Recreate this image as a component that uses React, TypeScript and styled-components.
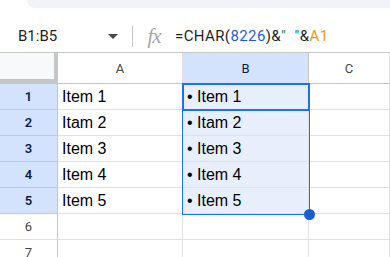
import styled, { createGlobalStyle } from "styled-components"

const GlobalStyle = createGlobalStyle`
  body{
    margin:0;
    background:white;
    font-family:Roboto, "Liberation Sans", Arial, sans-serif;
  }
`

const rows = [
  { n: 1, a: "Item 1", b: "• Item 1" },
  { n: 2, a: "Itam 2", b: "• Itam 2" },
  { n: 3, a: "Item 3", b: "• Item 3" },
  { n: 4, a: "Item 4", b: "• Item 4" },
  { n: 5, a: "Item 5", b: "• Item 5" },
  { n: 6, a: "", b: "" },
  { n: 7, a: "", b: "" }
]

export default function App() {
  return (
    <Page>
      <GlobalStyle />

      <TopStrip />

      <FormulaBar>
        <NameBox>
          <span>B1:B5</span>
          <Caret />
        </NameBox>
        <Divider />
        <Fx>fx</Fx>
        <Formula>
          =CHAR(<Num>8226</Num>)&amp;<Str>"&nbsp;&nbsp;"</Str>&amp;<Ref>A1</Ref>
        </Formula>
      </FormulaBar>

      <Sheet>
        <Corner />
        <ColHeader>A</ColHeader>
        <ColHeader $active>B</ColHeader>
        <ColHeader>C</ColHeader>

        {rows.map((r) => (
          <Row key={r.n}>
            <RowHeader $active={r.n <= 5}>{r.n}</RowHeader>
            <Cell>{r.a}</Cell>
            <Cell $selected={r.n <= 5}>{r.b}</Cell>
            <Cell />
          </Row>
        ))}

        <Selection>
          <ActiveCell />
          <FillHandle />
        </Selection>
      </Sheet>
    </Page>
  )
}

const Page = styled.div`
  width:390px;
  height:257px;
  overflow:hidden;
`

const TopStrip = styled.div`
  height:8px;
  margin-left:27px;
  background:#f0f4f9;
  border-bottom-left-radius:12px;
`

const FormulaBar = styled.div`
  height:32px;
  padding-top:12px;
  display:flex;
  align-items:center;
  border-bottom:1px solid #c7c7c7;
`

const NameBox = styled.div`
  width:100px;
  padding-left:18px;
  padding-right:14px;
  display:flex;
  align-items:center;
  justify-content:space-between;
  font-size:15px;
  color:#1f1f1f;
`

const Caret = styled.div`
  width:0;
  height:0;
  border-left:5px solid transparent;
  border-right:5px solid transparent;
  border-top:5px solid #444746;
`

const Divider = styled.div`
  width:1px;
  height:21px;
  background:#c7c7c7;
`

const Fx = styled.div`
  width:42px;
  text-align:center;
  font-family:"Liberation Serif", serif;
  font-style:italic;
  font-size:21px;
  color:#a6a6a6;
  letter-spacing:-1px;
`

const Formula = styled.div`
  font-size:15px;
  letter-spacing:0.4px;
  color:#1f1f1f;
  white-space:nowrap;
`

const Num = styled.span`
  color:#1a5fd0;
`

const Str = styled.span`
  color:#188038;
`

const Ref = styled.span`
  color:#f29900;
`

const Sheet = styled.div`
  position:relative;
  display:grid;
  grid-template-columns:58px 125px 126px 1fr;
  grid-auto-rows:26px;
  grid-template-rows:31px;
`

const Corner = styled.div`
  background:#f8f9fa;
  border-right:4px solid #c4c7c5;
  border-bottom:5px solid #c4c7c5;
`

const ColHeader = styled.div<{ $active?: boolean }>`
  display:flex;
  align-items:center;
  justify-content:center;
  font-size:13px;
  color:${(p) => (p.$active ? "#0b1f45" : "#444746")};
  background:${(p) => (p.$active ? "#d3e3fd" : "white")};
  border-right:1px solid ${(p) => (p.$active ? "#c4c7c5" : "#e1e1e1")};
  border-bottom:1px solid #c4c7c5;
`

const Row = styled.div`
  display:contents;
`

const RowHeader = styled.div<{ $active?: boolean }>`
  display:flex;
  align-items:center;
  justify-content:center;
  font-size:13px;
  font-weight:${(p) => (p.$active ? 600 : 400)};
  color:${(p) => (p.$active ? "#0b1f45" : "#444746")};
  background:${(p) => (p.$active ? "#d3e3fd" : "white")};
  border-right:1px solid #c4c7c5;
  border-bottom:1px solid ${(p) => (p.$active ? "#c4c7c5" : "#e1e1e1")};
`

const Cell = styled.div<{ $selected?: boolean }>`
  display:flex;
  align-items:center;
  padding-left:4px;
  font-family:Arial, "Liberation Sans", sans-serif;
  font-size:16px;
  color:#000;
  background:${(p) => (p.$selected ? "#e7effd" : "white")};
  border-right:1px solid #e1e1e1;
  border-bottom:1px solid #e1e1e1;
  overflow:hidden;
  white-space:nowrap;
`

const Selection = styled.div`
  position:absolute;
  left:182px;
  top:30px;
  width:126px;
  height:130px;
  border:1px solid #1a73e8;
  pointer-events:none;
`

const ActiveCell = styled.div`
  position:absolute;
  left:-1px;
  top:-1px;
  width:124px;
  height:24px;
  border:2px solid #1a73e8;
`

const FillHandle = styled.div`
  position:absolute;
  right:-6px;
  bottom:-6px;
  width:11px;
  height:11px;
  border-radius:50%;
  background:#1a5fd0;
`
